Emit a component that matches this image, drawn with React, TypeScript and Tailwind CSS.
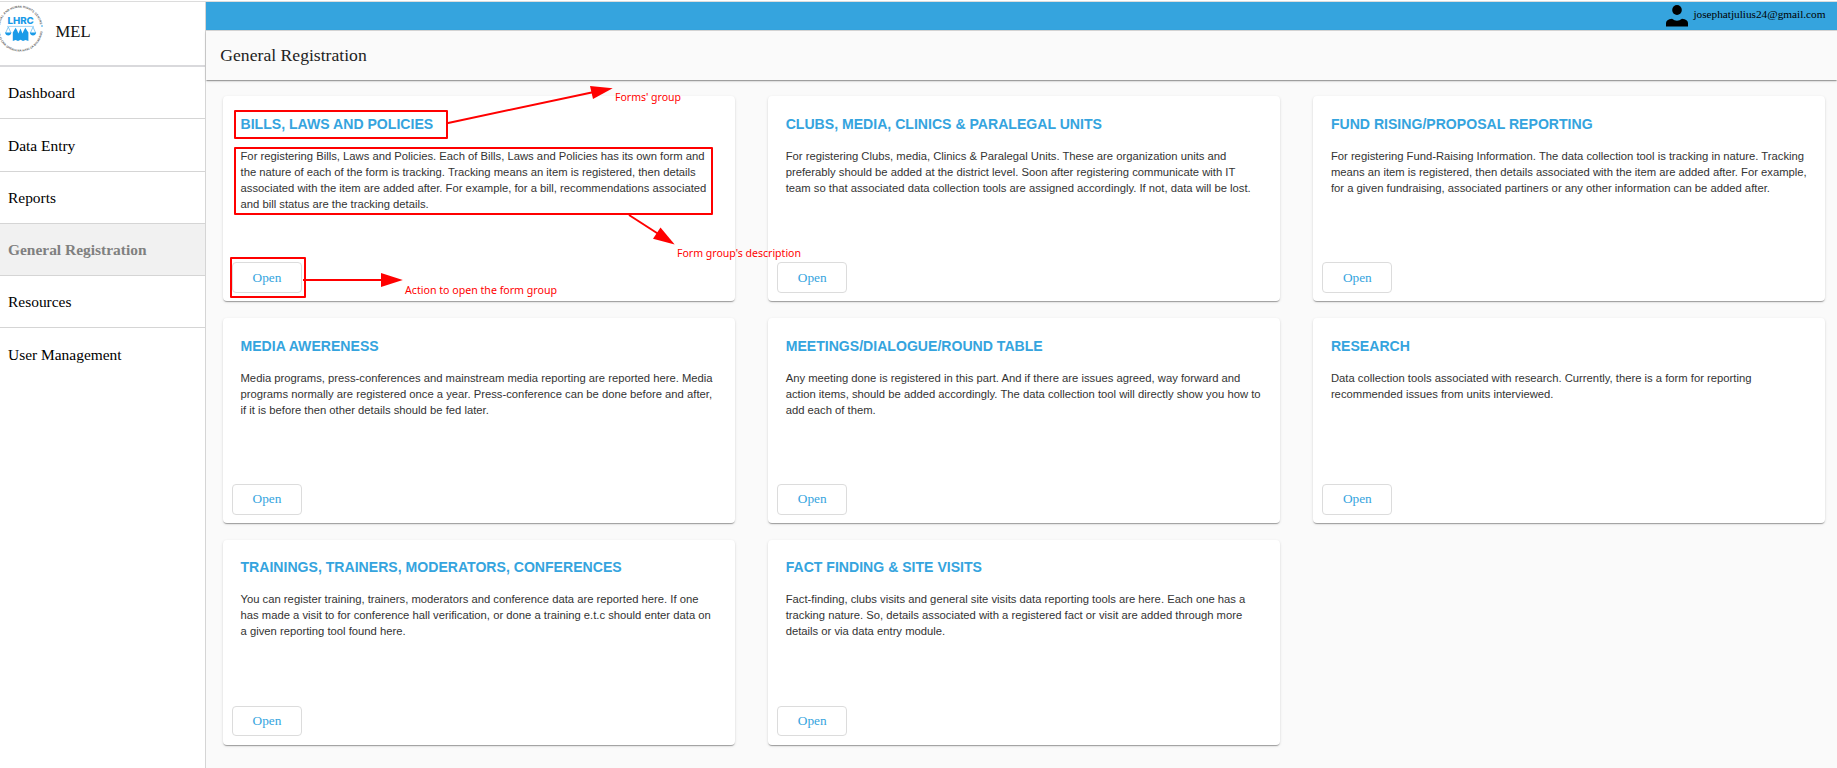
const navItems = [
  { label: "Dashboard", size: "h-[52px]" },
  { label: "Data Entry", size: "h-[53px] pt-px" },
  { label: "Reports", size: "h-[52px]" },
  { label: "General Registration", size: "h-[52px]", active: true },
  { label: "Resources", size: "h-[52px]" },
  { label: "User Management", size: "h-[54px]", last: true },
];

const groups = [
  {
    title: "BILLS, LAWS AND POLICIES",
    lines: [
      "For registering Bills, Laws and Policies. Each of Bills, Laws and Policies has its own form and",
      "the nature of each of the form is tracking. Tracking means an item is registered, then details",
      "associated with the item are added after. For example, for a bill, recommendations associated",
      "and bill status are the tracking details.",
    ],
  },
  {
    title: "CLUBS, MEDIA, CLINICS & PARALEGAL UNITS",
    lines: [
      "For registering Clubs, media, Clinics & Paralegal Units. These are organization units and",
      "preferably should be added at the district level. Soon after registering communicate with IT",
      "team so that associated data collection tools are assigned accordingly. If not, data will be lost.",
    ],
  },
  {
    title: "FUND RISING/PROPOSAL REPORTING",
    lines: [
      "For registering Fund-Raising Information. The data collection tool is tracking in nature. Tracking",
      "means an item is registered, then details associated with the item are added after. For example,",
      "for a given fundraising, associated partiners or any other information can be added after.",
    ],
  },
  {
    title: "MEDIA AWERENESS",
    lines: [
      "Media programs, press-conferences and mainstream media reporting are reported here. Media",
      "programs normally are registered once a year. Press-conference can be done before and after,",
      "if it is before then other details should be fed later.",
    ],
  },
  {
    title: "MEETINGS/DIALOGUE/ROUND TABLE",
    lines: [
      "Any meeting done is registered in this part. And if there are issues agreed, way forward and",
      "action items, should be added accordingly. The data collection tool will directly show you how to",
      "add each of them.",
    ],
  },
  {
    title: "RESEARCH",
    lines: [
      "Data collection tools associated with research. Currently, there is a form for reporting",
      "recommended issues from units interviewed.",
    ],
  },
  {
    title: "TRAININGS, TRAINERS, MODERATORS, CONFERENCES",
    lines: [
      "You can register training, trainers, moderators and conference data are reported here. If one",
      "has made a visit to for conference hall verification, or done a training e.t.c should enter data on",
      "a given reporting tool found here.",
    ],
  },
  {
    title: "FACT FINDING & SITE VISITS",
    lines: [
      "Fact-finding, clubs visits and general site visits data reporting tools are here. Each one has a",
      "tracking nature. So, details associated with a registered fact or visit are added through more",
      "details or via data entry module.",
    ],
  },
];

function Logo() {
  return (
    <svg className="block h-[50px] w-[46px] shrink-0" viewBox="0 0 46 50">
      <defs>
        <path id="ring-top" d="M -0.3 26 A 20.3 20.3 0 0 1 40.3 26" />
        <path id="ring-bottom" d="M -2.6 27 A 22.6 22.6 0 0 0 42.6 27" />
      </defs>
      <g fill="#5a5a5a" fontFamily="'Liberation Sans', sans-serif" fontWeight="700" fontSize="3">
        <text>
          <textPath href="#ring-top" startOffset="3" textLength="57">LEGAL AND HUMAN RIGHTS CENTRE</textPath>
        </text>
        <text>
          <textPath href="#ring-bottom" startOffset="2" textLength="66">KITUO CHA SHERIA NA HAKI ZA BINADAMU</textPath>
        </text>
      </g>
      <text x="7.4" y="22" textLength="26.4" lengthAdjust="spacingAndGlyphs" fill="#1a9be8" fontFamily="Inter, sans-serif" fontWeight="800" fontSize="9">
        LHRC
      </text>
      <circle cx="42" cy="24" r="0.8" fill="#1a9be8" />
      <path d="M7 24.4 H34" stroke="#8fcdf3" strokeWidth="0.8" />
      <path d="M8.3 25 L5.6 31 M8.3 25 L11 31 M33 25 L30.3 31 M33 25 L35.7 31" fill="none" stroke="#5bb6ee" strokeWidth="0.7" />
      <path fill="#1a9be8" d="M5 30.4 H11.4 Q10.8 33.4 8.2 33.4 Q5.6 33.4 5 30.4 Z M29.8 30.4 H36.2 Q35.6 33.4 33 33.4 Q30.4 33.4 29.8 30.4 Z" />
      <path fill="#1a9be8" d="M12.8 39 V30.5 L14 28.5 L15.6 25.8 L17.2 28.5 L18.4 31.5 L20.5 26.6 L22.5 31.5 L23.8 28.5 L25.4 25.8 L27 28.5 L28.4 30.5 V39 L25.5 38 L23 39 L20.6 37.8 L18 39 L15.6 38 Z" />
    </svg>
  );
}

function Sidebar() {
  return (
    <aside className="flex w-[206px] shrink-0 flex-col border-r border-[#d5d5d5] bg-white">
      <div className="flex h-[65px] items-start border-b-2 border-[#d9d9dc] text-[#111]">
        <Logo />
        <span className="ml-[9.5px] pt-[19px] text-[16.6px] leading-[22px]">MEL</span>
      </div>
      <nav className="flex flex-col text-[15.45px] text-black">
        {navItems.map((item) => (
          <a
            key={item.label}
            className={`flex items-center pl-2 ${item.size} ${item.last ? "" : "border-b border-[#d5d5d5]"} ${
              item.active ? "bg-[#f1f1f1] font-bold text-[#808080]" : ""
            }`}
          >
            {item.label}
          </a>
        ))}
      </nav>
    </aside>
  );
}

function Card({ title, lines }: { title: string; lines: string[] }) {
  return (
    <section className="flex h-[205px] flex-col rounded-[4px] bg-white pt-[19.8px] pb-[8.3px] font-['Liberation_Sans',sans-serif] shadow-[0_2px_1px_-1px_rgba(0,0,0,0.2),0_1px_1px_0_rgba(0,0,0,0.14),0_1px_3px_0_rgba(0,0,0,0.12)]">
      <h2 className="px-[17.5px] text-[14.08px] leading-4 font-bold whitespace-nowrap text-[#35a4de]">{title}</h2>
      <p className="mt-4 px-[17.5px] text-[11.26px] leading-4 whitespace-nowrap text-[#333]">
        {lines.map((line) => (
          <span key={line} className="block">
            {line}
          </span>
        ))}
      </p>
      <button className="mt-auto ml-[9px] h-[30.6px] w-[70px] rounded-[4px] border border-[#dcdcdc] bg-white font-['Liberation_Serif',serif] text-[13.3px] leading-5 text-[#35a4de]">
        Open
      </button>
    </section>
  );
}

function Annotations() {
  return (
    <svg className="pointer-events-none absolute top-0 left-0 h-[320px] w-[840px]" viewBox="0 0 840 320">
      <g fill="none" stroke="#ff0000" strokeWidth="2" strokeLinejoin="round">
        <rect x="235" y="111" width="212" height="27" />
        <rect x="235" y="148" width="477" height="66" />
        <rect x="231" y="258" width="74" height="39" />
        <path d="M447 123.2 L594 92" />
        <path d="M629 215 L660 235" />
        <path d="M303 280 H384" />
      </g>
      <g fill="#ff0000">
        <path d="M612.7 88.2 L590 86 L593 99 Z" />
        <path d="M674.7 244.6 L660.5 227.5 L653 238.8 Z" />
        <path d="M402.8 280 L381 273 V287 Z" />
        <g fontFamily="'Noto Sans', sans-serif" fontSize="11.4">
          <text x="615" y="101" textLength="66" lengthAdjust="spacingAndGlyphs">Forms' group</text>
          <text x="677" y="257" textLength="124" lengthAdjust="spacingAndGlyphs">Form group's description</text>
          <text x="405" y="294" textLength="152" lengthAdjust="spacingAndGlyphs">Action to open the form group</text>
        </g>
      </g>
    </svg>
  );
}

export default function App() {
  return (
    <div className="relative flex h-[768px] w-[1837px] flex-col overflow-hidden bg-[#fafafa] font-['Liberation_Serif',serif]">
      <div className="h-[2px] shrink-0 border-b border-[#dcdcdc] bg-white" />
      <div className="flex grow">
        <Sidebar />
        <main className="flex grow flex-col">
          <header className="flex h-[29px] justify-end border-b border-[#d8d8d8] bg-[#35a4de] pr-[11.5px]">
            <svg className="mt-[3px] mr-[5px] h-[22px] w-[22px]" viewBox="0 0 22 22">
              <ellipse cx="11" cy="5" rx="4.8" ry="5" />
              <path d="M0 21.5 V18 Q0 14.6 6 13.8 Q11 17.6 16 13.8 Q22 14.6 22 18 V21.5 Z" />
            </svg>
            <span className="pt-[4px] text-[11.27px] leading-4 text-black">josephatjulius24@gmail.com</span>
          </header>
          <div className="flex h-[49px] items-center pl-[14.3px] text-[17.65px] text-[#222] shadow-[0_2px_1px_-1px_rgba(0,0,0,0.2),0_1px_1px_0_rgba(0,0,0,0.14),0_1px_3px_0_rgba(0,0,0,0.12)]">
            General Registration
          </div>
          <div className="grid grid-cols-[512px_512px_512px] gap-x-[33.2px] gap-y-[16.7px] pt-[16.2px] pl-[17px]">
            {groups.map((group) => (
              <Card key={group.title} {...group} />
            ))}
          </div>
        </main>
      </div>
      <Annotations />
    </div>
  );
}
